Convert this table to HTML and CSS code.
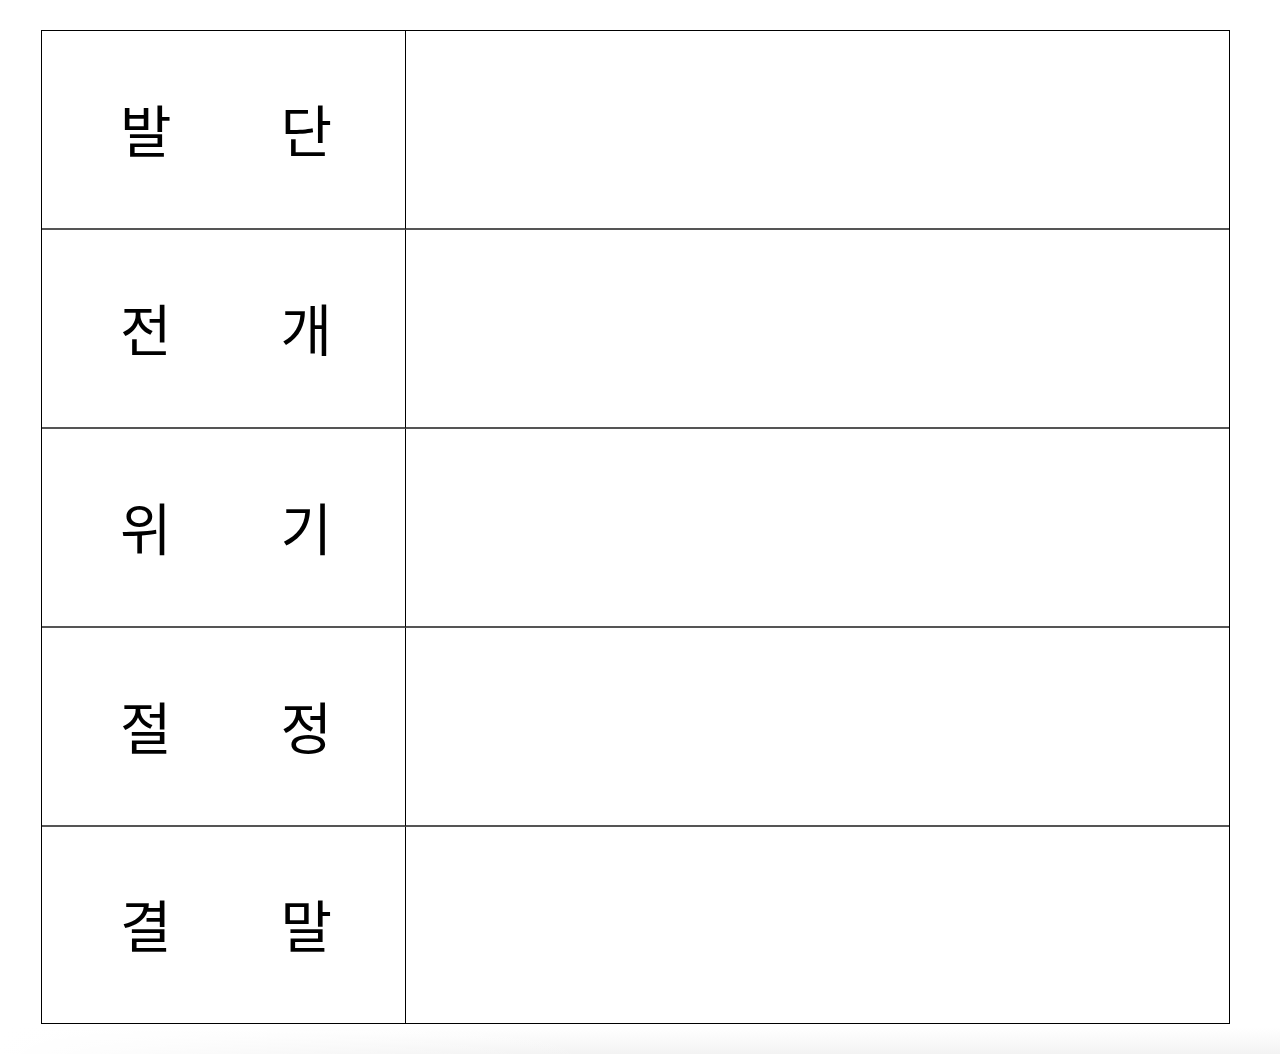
FILE: index.html
```html
<!DOCTYPE html>
<html lang="ko">
<head>
<meta charset="utf-8">
<link rel="stylesheet" href="styles.css">
</head>
<body>
<div class="sheet">
  <div class="grid">
    <div class="label"><span>발</span><span>단</span></div><div class="cell"></div>
    <div class="label"><span>전</span><span>개</span></div><div class="cell"></div>
    <div class="label"><span>위</span><span>기</span></div><div class="cell"></div>
    <div class="label"><span>절</span><span>정</span></div><div class="cell"></div>
    <div class="label last"><span>결</span><span>말</span></div><div class="cell last"></div>
  </div>
</div>
</body>
</html>
```

FILE: styles.css
```css
html, body {
  margin: 0;
  padding: 0;
}
body {
  width: 1280px;
  height: 1054px;
  background:
    linear-gradient(to right, rgba(255,255,255,1) 0, rgba(255,255,255,0.4) 320px, rgba(255,255,255,0) 600px),
    linear-gradient(to bottom, #ffffff 0, #ffffff 1028px, #f3f3f3 1054px);
  font-family: "Noto Sans CJK KR", "Noto Sans", sans-serif;
  overflow: hidden;
}
.sheet {
  padding: 30px 0 0 41px;
}
.grid {
  display: grid;
  grid-template-columns: 364px 823px;
  grid-template-rows: 199px 199px 199px 199px 196px;
  width: 1187px;
  border: 1px solid #000;
  background: #fff;
}
.label {
  display: flex;
  align-items: center;
  padding-left: 78px;
  padding-bottom: 4px;
  gap: 109px;
  font-size: 56px;
  line-height: 1;
  color: #000;
  border-right: 1px solid #000;
  border-bottom: 2px solid #555;
}
.cell {
  border-bottom: 2px solid #555;
}
.label.last,
.cell.last {
  border-bottom: none;
}
```
